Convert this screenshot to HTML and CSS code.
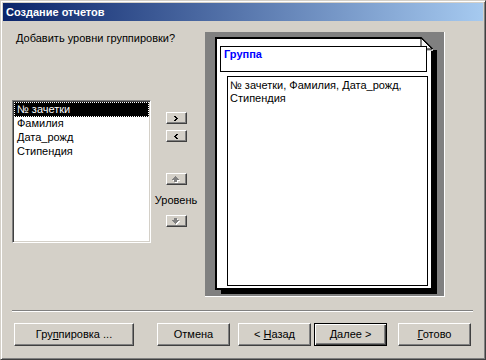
FILE: index.html
```html
<!DOCTYPE html>
<html lang="ru">

<head>
    <meta charset="UTF-8">
    <title>Создание отчетов</title>
    <link rel="stylesheet" href="styles.css">
</head>

<body>
    <div class="window">
        <div class="titlebar">Создание отчетов</div>
        <div class="content">
            <div class="main">
                <div class="left">
                    <div class="question">Добавить уровни группировки?</div>
                    <div class="list">
                        <div class="item selected">№ зачетки</div>
                        <div class="item">Фамилия</div>
                        <div class="item">Дата_рожд</div>
                        <div class="item">Стипендия</div>
                    </div>
                </div>
                <div class="mid">
                    <div class="sbtn add">
                        <svg width="4" height="5" viewBox="0 0 4 5">
                            <rect x="0" y="0" width="2" height="1" />
                            <rect x="1" y="1" width="2" height="1" />
                            <rect x="2" y="2" width="2" height="1" />
                            <rect x="1" y="3" width="2" height="1" />
                            <rect x="0" y="4" width="2" height="1" />
                        </svg>
                    </div>
                    <div class="sbtn remove">
                        <svg width="4" height="5" viewBox="0 0 4 5">
                            <rect x="2" y="0" width="2" height="1" />
                            <rect x="1" y="1" width="2" height="1" />
                            <rect x="0" y="2" width="2" height="1" />
                            <rect x="1" y="3" width="2" height="1" />
                            <rect x="2" y="4" width="2" height="1" />
                        </svg>
                    </div>
                    <div class="sbtn up">
                        <svg width="8" height="7" viewBox="0 0 8 7">
                            <g fill="#fff" transform="translate(1,1)">
                                <rect x="3" y="0" width="1" height="1" />
                                <rect x="2" y="1" width="3" height="1" />
                                <rect x="1" y="2" width="5" height="1" />
                                <rect x="0" y="3" width="7" height="1" />
                                <rect x="2" y="4" width="3" height="2" />
                            </g>
                            <g fill="#808080">
                                <rect x="3" y="0" width="1" height="1" />
                                <rect x="2" y="1" width="3" height="1" />
                                <rect x="1" y="2" width="5" height="1" />
                                <rect x="0" y="3" width="7" height="1" />
                                <rect x="2" y="4" width="3" height="2" />
                            </g>
                        </svg>
                    </div>
                    <div class="level">Уровень</div>
                    <div class="sbtn down">
                        <svg width="8" height="7" viewBox="0 0 8 7">
                            <g fill="#fff" transform="translate(1,1)">
                                <rect x="2" y="0" width="3" height="2" />
                                <rect x="0" y="2" width="7" height="1" />
                                <rect x="1" y="3" width="5" height="1" />
                                <rect x="2" y="4" width="3" height="1" />
                                <rect x="3" y="5" width="1" height="1" />
                            </g>
                            <g fill="#808080">
                                <rect x="2" y="0" width="3" height="2" />
                                <rect x="0" y="2" width="7" height="1" />
                                <rect x="1" y="3" width="5" height="1" />
                                <rect x="2" y="4" width="3" height="1" />
                                <rect x="3" y="5" width="1" height="1" />
                            </g>
                        </svg>
                    </div>
                </div>
                <div class="preview">
                    <div class="page">
                        <svg class="sheet" width="223" height="258" viewBox="0 0 223 258">
                            <!-- shadow -->
                            <rect x="218" y="13" width="4" height="244" fill="#000" />
                            <rect x="6" y="253" width="216" height="4" fill="#000" />
                            <!-- sheet with folded corner -->
                            <polygon points="1,1 206,1 217,12 217,252 1,252" fill="#fff" stroke="#000" stroke-width="2" />
                            <rect x="207" y="12" width="11" height="2" fill="#c0c0c0" />
                            <polygon points="206,1 206,12 217,12" fill="#f4f4f4" stroke="#000" stroke-width="1" />
                        </svg>
                        <div class="group-head">Группа</div>
                        <div class="group-body">№ зачетки, Фамилия, Дата_рожд, Стипендия</div>
                    </div>
                </div>
            </div>
            <div class="separator"></div>
            <div class="buttons">
                <div class="btn grouping"><span>Гру<u>п</u>пировка ...</span></div>
                <div class="btn cancel"><span>Отмена</span></div>
                <div class="btn back"><span>&lt; <u>Н</u>азад</span></div>
                <div class="btn next default"><span><u>Д</u>алее &gt;</span></div>
                <div class="btn done"><span><u>Г</u>отово</span></div>
            </div>
        </div>
    </div>
</body>

</html>
```

FILE: styles.css
```css
body {
    margin: 0;
    font-family: "Liberation Sans", Arial, sans-serif;
    font-size: 11px;
    line-height: 13px;
    color: #000;
}

.window {
    width: 486px;
    height: 360px;
    box-sizing: border-box;
    padding: 2px;

    background-color: #d4d0c8;
    border: 1px solid;
    border-color: #d4d0c8 #404040 #404040 #d4d0c8;
    box-shadow: inset 1px 1px #fff, inset -1px -1px #808080;
}

.titlebar {
    height: 18px;
    padding-left: 3px;

    background: linear-gradient(to right, #0a246a, #a6caf0);
    color: #fff;
    font-weight: bold;
    line-height: 18px;
}

.content {
    height: 336px;
}

.main {
    display: flex;
    height: 265px;
    padding: 11px 0 0 9px;
}

.left {
    width: 139px;
}

.question {
    height: 68px;
    padding-left: 4px;
    white-space: nowrap;
}

.list {
    height: 143px;
    box-sizing: border-box;
    padding: 1px;

    background-color: #fff;
    border: 1px solid;
    border-color: #808080 #fff #fff #808080;
    box-shadow: inset 1px 1px #404040, inset -1px -1px #d4d0c8;
}

.list .item {
    height: 13px;
    padding-left: 2px;
    border: 1px solid transparent;
    line-height: 13px;
    margin-bottom: -1px;
    white-space: nowrap;
}

.list .item.selected {
    background-color: #000;
    color: #fff;
    border: 1px dotted #fff;
}

.mid {
    width: 50px;
    padding-top: 80px;

    display: flex;
    flex-direction: column;
    align-items: center;
}

.sbtn {
    width: 21px;
    height: 12px;
    box-sizing: border-box;

    display: flex;
    align-items: center;
    justify-content: center;

    border: 1px solid;
    border-color: #fff #404040 #404040 #fff;
    box-shadow: inset -1px -1px #808080;
}

.sbtn svg {
    fill: #000;
}

.sbtn.remove {
    margin-top: 6px;
}

.sbtn.up {
    margin-top: 31px;
}

.level {
    margin: 9px 0 8px;
    white-space: nowrap;
}

.preview {
    width: 239px;
    height: 264px;
    margin-left: 4px;

    background-color: #808080;
    border-right: 1px solid #fff;
    border-bottom: 1px solid #fff;
}

.page {
    position: relative;
    width: 223px;
    height: 258px;
    box-sizing: border-box;
    margin: 5px 0 0 10px;
    padding: 9px 0 0 5px;
}

.page .sheet {
    position: absolute;
    left: 0;
    top: 0;
}

.group-head,
.group-body {
    position: relative;
    box-sizing: border-box;
    border: 1px solid #000;
    background-color: #fff;
}

.group-head {
    width: 207px;
    height: 26px;
    padding: 1px 3px;

    color: #0000ff;
    font-weight: bold;
}

.group-body {
    width: 201px;
    height: 210px;
    margin: 4px 0 0 7px;
    padding: 2px 2px;
}

.separator {
    height: 1px;
    width: 461px;
    margin: 13px 0 0 9px;

    background-color: #808080;
    border-bottom: 1px solid #fff;
}

.buttons {
    display: flex;
    padding: 11px 0 0 11px;
}

.btn {
    width: 73px;
    height: 23px;
    box-sizing: border-box;

    display: flex;
    align-items: center;
    justify-content: center;

    border: 1px solid;
    border-color: #fff #404040 #404040 #fff;
    box-shadow: inset -1px -1px #808080;
    white-space: nowrap;
}

.btn.grouping {
    width: 120px;
}

.btn.cancel {
    margin-left: 23px;
}

.btn.back {
    margin-left: 8px;
}

.btn.next {
    margin-left: 3px;
}

.btn.done {
    margin-left: 11px;
}

.btn.default {
    border-color: #000;
    box-shadow: inset 1px 1px #fff, inset -1px -1px #404040, inset -2px -2px #808080;
}
```
